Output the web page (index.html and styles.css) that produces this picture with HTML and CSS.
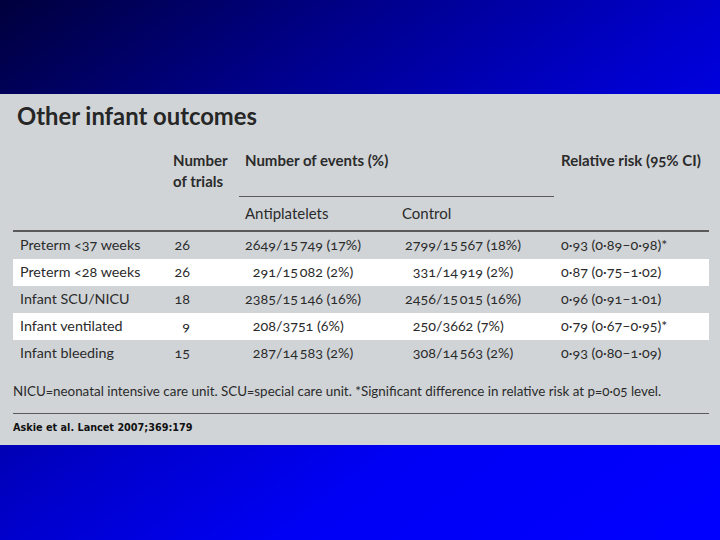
FILE: index.html
```html
<!DOCTYPE html>
<html>
<head>
<meta charset="utf-8">
<link rel="stylesheet" href="styles.css">
</head>
<body>
<div class="slide">
  <div class="band-top"></div>
  <div class="panel">
    <h1 class="title">Other infant outcomes</h1>
    <div class="thead">
      <div class="h-label"></div>
      <div class="h-trials">Number<br>of trials</div>
      <div class="h-events">Number of events (%)</div>
      <div class="h-rr">Relative risk (95% CI)</div>
      <div class="h-sub h-anti">Antiplatelets</div>
      <div class="h-sub h-ctrl">Control</div>
    </div>
    <div class="tbody">
      <div class="row">
        <div class="c-label">Preterm &lt;37 weeks</div>
        <div class="c-trials">26</div>
        <div class="c-anti"><span class="num">2649</span>/15&#8201;749 (17%)</div>
        <div class="c-ctrl"><span class="num">2799</span>/15&#8201;567 (18%)</div>
        <div class="c-rr">0·93 (0·89–0·98)*</div>
      </div>
      <div class="row alt">
        <div class="c-label">Preterm &lt;28 weeks</div>
        <div class="c-trials">26</div>
        <div class="c-anti"><span class="num">291</span>/15&#8201;082 (2%)</div>
        <div class="c-ctrl"><span class="num">331</span>/14&#8201;919 (2%)</div>
        <div class="c-rr">0·87 (0·75–1·02)</div>
      </div>
      <div class="row">
        <div class="c-label">Infant SCU/NICU</div>
        <div class="c-trials">18</div>
        <div class="c-anti"><span class="num">2385</span>/15&#8201;146 (16%)</div>
        <div class="c-ctrl"><span class="num">2456</span>/15&#8201;015 (16%)</div>
        <div class="c-rr">0·96 (0·91–1·01)</div>
      </div>
      <div class="row alt">
        <div class="c-label">Infant ventilated</div>
        <div class="c-trials">9</div>
        <div class="c-anti"><span class="num">208</span>/3751 (6%)</div>
        <div class="c-ctrl"><span class="num">250</span>/3662 (7%)</div>
        <div class="c-rr">0·79 (0·67–0·95)*</div>
      </div>
      <div class="row">
        <div class="c-label">Infant bleeding</div>
        <div class="c-trials">15</div>
        <div class="c-anti"><span class="num">287</span>/14&#8201;583 (2%)</div>
        <div class="c-ctrl"><span class="num">308</span>/14&#8201;563 (2%)</div>
        <div class="c-rr">0·93 (0·80–1·09)</div>
      </div>
    </div>
    <p class="footnote">NICU=neonatal intensive care unit. SCU=special care unit. *Significant difference in relative risk at p=0·05 level.</p>
    <p class="source">Askie et al. Lancet 2007;369:179</p>
  </div>
  <div class="band-bottom"></div>
</div>
</body>
</html>
```

FILE: styles.css
```css
html, body {
  margin: 0;
  padding: 0;
}

body {
  width: 720px;
  height: 540px;
  overflow: hidden;
  background: linear-gradient(to bottom right, #00003c 0%, #000088 25%, #0000cc 50%, #0000f5 70%, #0000ff 100%);
  font-family: Lato, "Open Sans", sans-serif;
  color: #2b2b2b;
}

.slide {
  display: flex;
  flex-direction: column;
  height: 540px;
}

.band-top {
  height: 94px;
  flex: none;
}

.panel {
  background: #d0d4d7;
  padding: 6px 11px 0 13px;
  height: 351px;
  box-sizing: border-box;
  font-variant-numeric: oldstyle-nums;
}

.title {
  margin: 0 0 0 4px;
  font-size: 23.8px;
  line-height: 32px;
  font-weight: 700;
  color: #262626;
}

.thead {
  display: grid;
  grid-template-columns: 152px 70px 160px 159px 155px;
  grid-template-rows: 53px 33px;
  margin-top: 12px;
  border-bottom: 2px solid #5a5a5a;
  font-size: 15px;
}

.h-trials {
  grid-column: 2;
  grid-row: 1;
  padding: 6px 0 0 8px;
  font-weight: 700;
  line-height: 21px;
}

.h-events {
  grid-column: 3 / span 2;
  grid-row: 1;
  margin-left: 4px;
  padding: 6px 0 0 6px;
  font-weight: 700;
  line-height: 21px;
  border-bottom: 1px solid #5a5a5a;
}

.h-rr {
  grid-column: 5;
  grid-row: 1;
  padding: 6px 0 0 7px;
  font-weight: 700;
  line-height: 21px;
}

.h-sub {
  grid-row: 2;
  display: flex;
  align-items: center;
  padding-bottom: 1px;
}

.h-anti {
  grid-column: 3;
  padding-left: 10px;
}

.h-ctrl {
  grid-column: 4;
  padding-left: 7px;
}

.row {
  display: grid;
  grid-template-columns: 152px 70px 160px 159px 155px;
  height: 27px;
  align-items: center;
  font-size: 14.3px;
  padding-bottom: 2px;
  box-sizing: border-box;
}

.alt {
  background: #ffffff;
}

.c-label {
  padding-left: 7px;
}

.c-trials {
  width: 25px;
  text-align: right;
}

.num {
  display: inline-block;
  width: 34px;
  text-align: right;
}

.c-anti {
  padding-left: 7px;
}

.c-ctrl {
  padding-left: 7px;
}

.c-rr {
  padding-left: 7px;
}

.footnote {
  margin: 15px 0 0 0;
  padding-bottom: 13px;
  border-bottom: 1px solid #5a5a5a;
  font-size: 13.4px;
  line-height: 18px;
}

.source {
  margin: 6px 0 0 0;
  font-family: "DejaVu Sans", sans-serif;
  font-weight: 700;
  font-size: 9.7px;
  line-height: 16px;
  color: #111;
}

.band-bottom {
  flex: 1;
}
```
